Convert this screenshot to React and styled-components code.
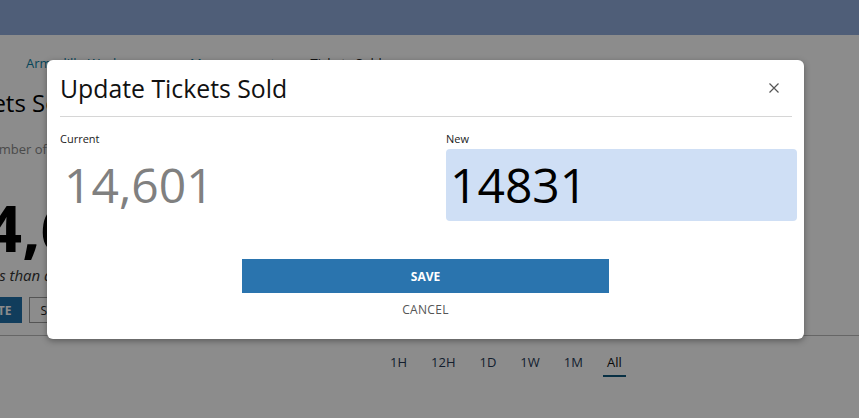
import React from "react";
import styled, { createGlobalStyle } from "styled-components";

const GlobalStyle = createGlobalStyle`
  html, body { margin: 0; padding: 0; }
  body { font-family: "Open Sans", "Liberation Sans", sans-serif; background: #fff; }
  * { box-sizing: border-box; }
`;

const Page = styled.div`
  position: relative;
  width: 859px;
  height: 418px;
  overflow: hidden;
  background: #ffffff;
`;

const TopBar = styled.header`
  height: 35px;
  background: #90abda;
`;

const Content = styled.main`
  display: flex;
  flex-direction: column;
  margin-left: -40px;
`;

const Breadcrumb = styled.nav`
  display: flex;
  gap: 14px;
  padding: 18px 0 0 66px;
  font-size: 13px;
  line-height: 20px;
`;

const Crumb = styled.span`
  color: ${(p) => (p.$current ? "#222" : "#0b7ea3")};
`;

const PageTitle = styled.h1`
  margin: 12px 0 0 -11px;
  font-size: 24px;
  font-weight: 400;
  line-height: 36px;
  color: #000;
  white-space: nowrap;
`;

const Subtitle = styled.p`
  margin: 18px 0 0 21px;
  font-size: 13px;
  line-height: 20px;
  color: #888;
  white-space: nowrap;
`;

const BigNumber = styled.div`
  margin: 29px 0 0 -11px;
  font-size: 64px;
  font-weight: 700;
  line-height: 80px;
  color: #000;
  white-space: nowrap;
`;

const Note = styled.p`
  margin: -3px 0 0 18px;
  font-size: 15px;
  font-style: italic;
  line-height: 20px;
  color: #333;
  white-space: nowrap;
`;

const ActionRow = styled.div`
  display: flex;
  gap: 7px;
  margin: 12px 0 0 -7px;
`;

const PageButton = styled.button`
  height: 26px;
  padding: 0 10px;
  font-family: inherit;
  font-size: 12px;
  font-weight: ${(p) => (p.$primary ? 700 : 400)};
  color: ${(p) => (p.$primary ? "#fff" : "#222")};
  background: ${(p) => (p.$primary ? "#1f70a8" : "#fff")};
  border: 1px solid ${(p) => (p.$primary ? "#1f70a8" : "#999")};
  border-radius: 0;
`;

const Rule = styled.hr`
  margin: 12px 0 0 0;
  border: 0;
  border-top: 1px solid #bbb;
  width: 1000px;
`;

const Tabs = styled.div`
  display: flex;
  gap: 16px;
  padding: 17px 0 0 426px;
`;

const Tab = styled.span`
  padding: 0 4px 4px;
  font-size: 13px;
  line-height: 18px;
  color: ${(p) => (p.$active ? "#111" : "#253a55")};
  border-bottom: 2px solid ${(p) => (p.$active ? "#0f587c" : "transparent")};
`;

const Overlay = styled.div`
  position: absolute;
  inset: 0;
  background: rgba(0, 0, 0, 0.45);
  padding: 60px 0 0 47px;
`;

const Modal = styled.section`
  width: 757px;
  background: #fff;
  border-radius: 6px;
  box-shadow: 0 2px 6px rgba(0, 0, 0, 0.35);
  padding: 0 12px 21px 13px;
  display: flex;
  flex-direction: column;
`;

const ModalHeader = styled.div`
  height: 57px;
  display: flex;
  align-items: center;
  justify-content: space-between;
  border-bottom: 1px solid #d6d6d6;
`;

const ModalTitle = styled.h2`
  margin: 0;
  font-size: 24.8px;
  font-weight: 400;
  color: #111;
`;

const CloseButton = styled.button`
  width: 24px;
  height: 24px;
  margin-right: 6px;
  padding: 0;
  display: flex;
  align-items: center;
  justify-content: center;
  background: none;
  border: 0;
  color: #555;
`;

const Fields = styled.div`
  display: grid;
  grid-template-columns: 386px 351px;
  padding-top: 14px;
`;

const Field = styled.div`
  display: flex;
  flex-direction: column;
  gap: 3px;
`;

const Label = styled.label`
  font-size: 11px;
  line-height: 15px;
  color: #222;
`;

const ValueBox = styled.div`
  height: 72px;
  display: flex;
  align-items: center;
  padding: 0 0 0 4px;
  font-size: 48px;
  line-height: 1;
  border-radius: 4px;
  color: ${(p) => (p.$editable ? "#000" : "#808080")};
  background: ${(p) => (p.$editable ? "#cfdff5" : "transparent")};
`;

const Actions = styled.div`
  display: flex;
  flex-direction: column;
  align-items: center;
  gap: 9px;
  padding-top: 38px;
  margin-left: -1px;
`;

const SaveButton = styled.button`
  width: 367px;
  height: 34px;
  border: 0;
  background: #2a74ae;
  color: #fff;
  font-family: inherit;
  font-size: 12px;
  font-weight: 700;
`;

const CancelButton = styled.button`
  border: 0;
  background: none;
  padding: 0;
  font-family: inherit;
  font-size: 12px;
  line-height: 16px;
  color: #555;
  letter-spacing: 0.3px;
`;

export default function App() {
  return (
    <Page>
      <GlobalStyle />
      <TopBar />
      <Content>
        <Breadcrumb>
          <Crumb>Armadillo Workspace</Crumb>
          <Crumb>&gt;</Crumb>
          <Crumb>Measurement</Crumb>
          <Crumb>&gt;</Crumb>
          <Crumb $current>Tickets Sold</Crumb>
        </Breadcrumb>
        <PageTitle>Tickets Sold</PageTitle>
        <Subtitle>Number of tickets sold</Subtitle>
        <BigNumber>14,601</BigNumber>
        <Note>Less than a minute ago</Note>
        <ActionRow>
          <PageButton $primary>UPDATE</PageButton>
          <PageButton>SET GOAL</PageButton>
        </ActionRow>
        <Rule />
        <Tabs>
          <Tab>1H</Tab>
          <Tab>12H</Tab>
          <Tab>1D</Tab>
          <Tab>1W</Tab>
          <Tab>1M</Tab>
          <Tab $active>All</Tab>
        </Tabs>
      </Content>
      <Overlay>
        <Modal>
          <ModalHeader>
            <ModalTitle>Update Tickets Sold</ModalTitle>
            <CloseButton aria-label="Close">
              <svg width="10" height="10" viewBox="0 0 10 10">
                <path d="M0.5 0.5 L9.5 9.5 M9.5 0.5 L0.5 9.5" stroke="#555" strokeWidth="1.2" />
              </svg>
            </CloseButton>
          </ModalHeader>
          <Fields>
            <Field>
              <Label>Current</Label>
              <ValueBox>14,601</ValueBox>
            </Field>
            <Field>
              <Label>New</Label>
              <ValueBox $editable>14831</ValueBox>
            </Field>
          </Fields>
          <Actions>
            <SaveButton>SAVE</SaveButton>
            <CancelButton>CANCEL</CancelButton>
          </Actions>
        </Modal>
      </Overlay>
    </Page>
  );
}
